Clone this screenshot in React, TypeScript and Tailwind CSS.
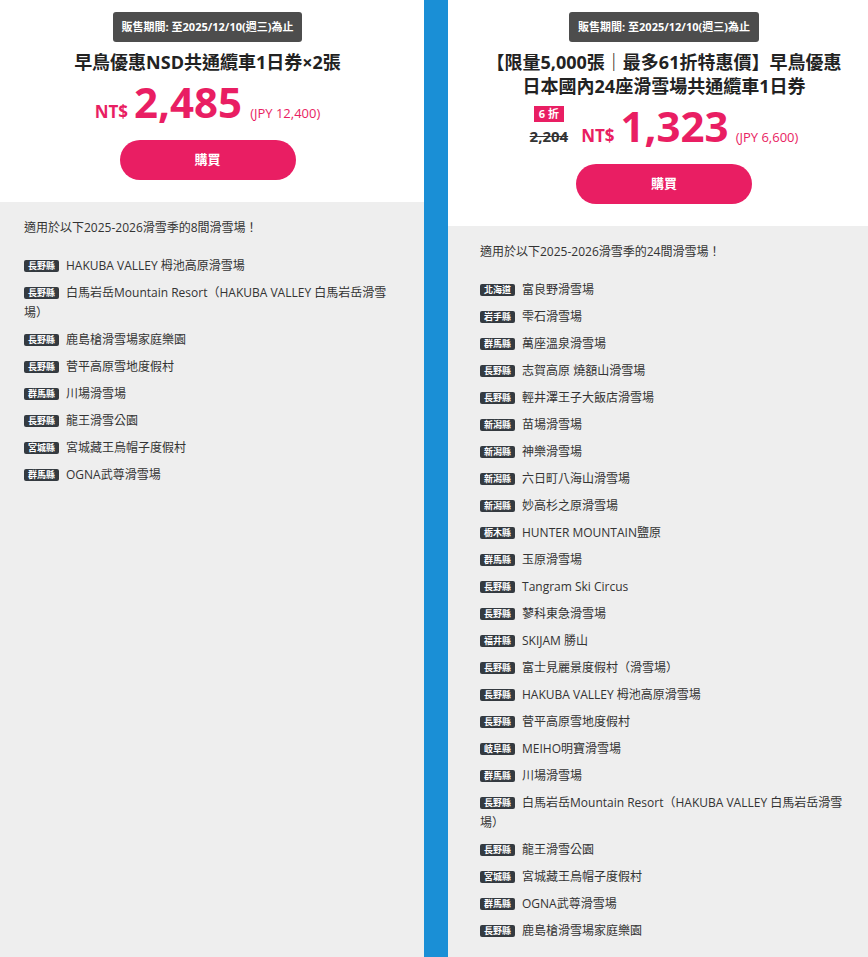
import React from "react";

type Item = { pref: string; name: string };

const leftItems: Item[] = [
  { pref: "長野縣", name: "HAKUBA VALLEY 栂池高原滑雪場" },
  { pref: "長野縣", name: "白馬岩岳Mountain Resort（HAKUBA VALLEY 白馬岩岳滑雪場）" },
  { pref: "長野縣", name: "鹿島槍滑雪場家庭樂園" },
  { pref: "長野縣", name: "菅平高原雪地度假村" },
  { pref: "群馬縣", name: "川場滑雪場" },
  { pref: "長野縣", name: "龍王滑雪公園" },
  { pref: "宮城縣", name: "宮城藏王烏帽子度假村" },
  { pref: "群馬縣", name: "OGNA武尊滑雪場" },
];

const rightItems: Item[] = [
  { pref: "北海道", name: "富良野滑雪場" },
  { pref: "岩手縣", name: "雫石滑雪場" },
  { pref: "群馬縣", name: "萬座溫泉滑雪場" },
  { pref: "長野縣", name: "志賀高原 燒額山滑雪場" },
  { pref: "長野縣", name: "輕井澤王子大飯店滑雪場" },
  { pref: "新潟縣", name: "苗場滑雪場" },
  { pref: "新潟縣", name: "神樂滑雪場" },
  { pref: "新潟縣", name: "六日町八海山滑雪場" },
  { pref: "新潟縣", name: "妙高杉之原滑雪場" },
  { pref: "栃木縣", name: "HUNTER MOUNTAIN鹽原" },
  { pref: "群馬縣", name: "玉原滑雪場" },
  { pref: "長野縣", name: "Tangram Ski Circus" },
  { pref: "長野縣", name: "蓼科東急滑雪場" },
  { pref: "福井縣", name: "SKIJAM 勝山" },
  { pref: "長野縣", name: "富士見麗景度假村（滑雪場）" },
  { pref: "長野縣", name: "HAKUBA VALLEY 栂池高原滑雪場" },
  { pref: "長野縣", name: "菅平高原雪地度假村" },
  { pref: "岐阜縣", name: "MEIHO明寶滑雪場" },
  { pref: "群馬縣", name: "川場滑雪場" },
  { pref: "長野縣", name: "白馬岩岳Mountain Resort（HAKUBA VALLEY 白馬岩岳滑雪場）" },
  { pref: "長野縣", name: "龍王滑雪公園" },
  { pref: "宮城縣", name: "宮城藏王烏帽子度假村" },
  { pref: "群馬縣", name: "OGNA武尊滑雪場" },
  { pref: "長野縣", name: "鹿島槍滑雪場家庭樂園" },
];

function SaleBadge() {
  return (
    <div className="inline-flex items-center h-[30px] px-[9px] rounded-[3px] bg-[#4d4d4d] text-white text-[11px] font-bold">
      販售期間: 至2025/12/10(週三)為止
    </div>
  );
}

function BuyButton() {
  return (
    <button className="mt-[15px] w-[176px] h-[40px] rounded-full bg-[#e91e63] text-white text-[13px] font-bold flex items-center justify-center">
      購買
    </button>
  );
}

function ResortList({ heading, items }: { heading: string; items: Item[] }) {
  return (
    <div className="text-[12px] leading-[20px] text-[#333]">
      <p className="mb-[18px]">{heading}</p>
      {items.map((it, i) => (
        <p key={i} className="mb-[7px]">
          <span className="inline-block align-middle bg-[#343a40] text-white text-[9px] font-bold leading-[12px] px-[4px] rounded-[2px] mr-[7px]">
            {it.pref}
          </span>
          {it.name}
        </p>
      ))}
    </div>
  );
}

export default function App() {
  return (
    <div className="flex w-[868px] h-[957px] overflow-hidden bg-[#eeeeee] font-['Open_Sans','Noto_Sans_CJK_TC',sans-serif]">
      {/* Left column */}
      <div className="w-[424px] shrink-0 flex flex-col">
        <div className="bg-white pt-[12px] pb-[22px] pr-[9px] flex flex-col items-center">
          <SaleBadge />
          <h2 className="mt-[8px] text-[18px] leading-[24px] font-bold text-[#222] text-center">
            早鳥優惠NSD共通纜車1日券×2張
          </h2>
          <div className="mt-[7px] flex items-baseline justify-center text-[#e91e63]">
            <span className="text-[17px] font-bold mr-[6px]">NT$</span>
            <span className="text-[42px] font-bold leading-none">2,485</span>
            <span className="text-[13px] ml-[8px]">(JPY 12,400)</span>
          </div>
          <BuyButton />
        </div>
        <div className="flex-1 pt-[16px] pl-[24px] pr-[24px]">
          <ResortList heading="適用於以下2025-2026滑雪季的8間滑雪場！" items={leftItems} />
        </div>
      </div>

      {/* Divider */}
      <div className="w-[24px] shrink-0 bg-[#1a8fd6]" />

      {/* Right column */}
      <div className="flex-1 flex flex-col">
        <div className="bg-white pt-[12px] pb-[22px] pl-[12px] flex flex-col items-center">
          <SaleBadge />
          <h2 className="mt-[8px] text-[18px] leading-[24px] font-bold text-[#222] text-center">
            【限量5,000張｜最多61折特惠價】早鳥優惠
            <br />
            日本國內24座滑雪場共通纜車1日券
          </h2>
          <div className="mt-[7px] flex items-baseline justify-center">
            <span className="relative text-[15px] leading-[18px] font-bold text-[#333] line-through mr-[13px]">
              <span className="absolute bottom-full left-1/2 -translate-x-1/2 mb-[5px] w-[30px] h-[16px] bg-[#e91e63] text-white text-[11px] font-bold leading-[16px] text-center no-underline">
                6 折
              </span>
              2,204
            </span>
            <span className="text-[17px] font-bold mr-[6px] text-[#e91e63]">NT$</span>
            <span className="text-[42px] font-bold leading-none text-[#e91e63]">1,323</span>
            <span className="text-[13px] ml-[7px] text-[#e91e63]">(JPY 6,600)</span>
          </div>
          <BuyButton />
        </div>
        <div className="flex-1 pt-[16px] pl-[32px] pr-[24px]">
          <ResortList heading="適用於以下2025-2026滑雪季的24間滑雪場！" items={rightItems} />
        </div>
      </div>
    </div>
  );
}
